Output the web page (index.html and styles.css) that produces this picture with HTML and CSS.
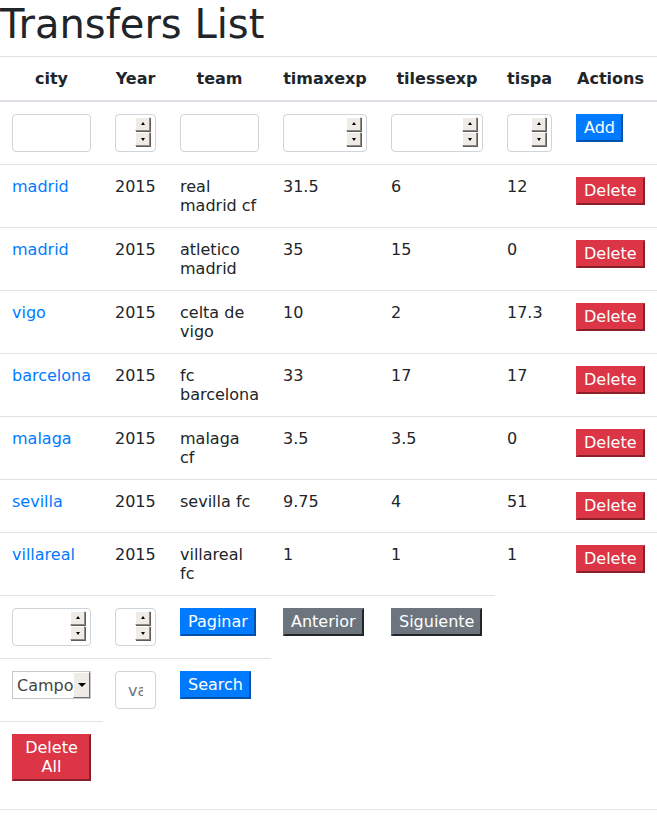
FILE: index.html
```html
<!DOCTYPE html>
<html>
<head>
<meta charset="utf-8">
<link rel="stylesheet" href="styles.css">
</head>
<body>
<h1 class="title">Transfers List</h1>
<table class="table">
  <colgroup>
    <col class="c-city"><col class="c-year"><col class="c-team"><col class="c-max"><col class="c-less"><col class="c-spa"><col class="c-act">
  </colgroup>
  <thead>
    <tr><th>city</th><th>Year</th><th>team</th><th>timaxexp</th><th>tilessexp</th><th>tispa</th><th>Actions</th></tr>
  </thead>
  <tbody>
    <tr>
      <td><input class="form-control" type="text"></td>
      <td><span class="num"><input class="form-control" type="number"><span class="spin"><span class="spin-btn up"></span><span class="spin-btn down"></span></span></span></td>
      <td><input class="form-control" type="text"></td>
      <td><span class="num"><input class="form-control" type="number"><span class="spin"><span class="spin-btn up"></span><span class="spin-btn down"></span></span></span></td>
      <td><span class="num"><input class="form-control" type="number"><span class="spin"><span class="spin-btn up"></span><span class="spin-btn down"></span></span></span></td>
      <td><span class="num"><input class="form-control" type="number"><span class="spin"><span class="spin-btn up"></span><span class="spin-btn down"></span></span></span></td>
      <td><button class="btn btn-primary">Add</button></td>
    </tr>
    <tr><td><a class="link" href="#">madrid</a></td><td>2015</td><td>real madrid cf</td><td>31.5</td><td>6</td><td>12</td><td><button class="btn btn-danger">Delete</button></td></tr>
    <tr><td><a class="link" href="#">madrid</a></td><td>2015</td><td>atletico madrid</td><td>35</td><td>15</td><td>0</td><td><button class="btn btn-danger">Delete</button></td></tr>
    <tr><td><a class="link" href="#">vigo</a></td><td>2015</td><td>celta de vigo</td><td>10</td><td>2</td><td>17.3</td><td><button class="btn btn-danger">Delete</button></td></tr>
    <tr><td><a class="link" href="#">barcelona</a></td><td>2015</td><td>fc barcelona</td><td>33</td><td>17</td><td>17</td><td><button class="btn btn-danger">Delete</button></td></tr>
    <tr><td><a class="link" href="#">malaga</a></td><td>2015</td><td>malaga cf</td><td>3.5</td><td>3.5</td><td>0</td><td><button class="btn btn-danger">Delete</button></td></tr>
    <tr><td><a class="link" href="#">sevilla</a></td><td>2015</td><td>sevilla fc</td><td>9.75</td><td>4</td><td>51</td><td><button class="btn btn-danger">Delete</button></td></tr>
    <tr><td><a class="link" href="#">villareal</a></td><td>2015</td><td>villareal fc</td><td>1</td><td>1</td><td>1</td><td><button class="btn btn-danger">Delete</button></td></tr>
    <tr>
      <td><span class="num"><input class="form-control" type="number"><span class="spin"><span class="spin-btn up"></span><span class="spin-btn down"></span></span></span></td>
      <td><span class="num"><input class="form-control" type="number"><span class="spin"><span class="spin-btn up"></span><span class="spin-btn down"></span></span></span></td>
      <td><button class="btn btn-primary">Paginar</button></td>
      <td><button class="btn btn-secondary">Anterior</button></td>
      <td><button class="btn btn-secondary">Siguiente</button></td>
    </tr>
    <tr>
      <td><span class="sel"><select class="select"><option>Campo</option><option>city</option><option>team</option></select><span class="sel-btn"></span></span></td>
      <td><input class="form-control" type="text" placeholder="value"></td>
      <td><button class="btn btn-primary">Search</button></td>
    </tr>
    <tr>
      <td><button class="btn btn-danger">Delete All</button></td>
    </tr>
  </tbody>
</table>
<hr class="rule">
</body>
</html>
```
FILE: styles.css
```css
html, body {
  margin: 0;
  padding: 0;
  background: #fff;
}
body {
  font-family: "DejaVu Sans", sans-serif;
  font-size: 16px;
  line-height: 19px;
  color: #212529;
}
.title {
  margin: 0 0 8px 0;
  font-size: 40px;
  line-height: 48px;
  font-weight: 500;
  color: #212529;
}
.table {
  width: 657px;
  table-layout: fixed;
  border-collapse: collapse;
  margin-bottom: 16px;
}
.c-city { width: 103px; }
.c-year { width: 65px; }
.c-team { width: 103px; }
.c-max { width: 108px; }
.c-less { width: 116px; }
.c-spa { width: 69px; }
.c-act { width: 93px; }
.table th,
.table td {
  padding: 12px;
  vertical-align: top;
  border-top: 1px solid #dee2e6;
  text-align: left;
}
.table th {
  font-weight: bold;
  text-align: center;
  border-bottom: 2px solid #dee2e6;
}
.link {
  color: #007bff;
  text-decoration: none;
}
.form-control {
  display: block;
  box-sizing: border-box;
  width: 100%;
  height: 38px;
  margin: 0;
  padding: 6px 12px;
  font-family: "DejaVu Sans", sans-serif;
  font-size: 16px;
  line-height: 24px;
  color: #495057;
  background: #fff;
  border: 1px solid #ced4da;
  border-radius: 4px;
  -moz-appearance: textfield;
}
.form-control::-webkit-inner-spin-button,
.form-control::-webkit-outer-spin-button {
  -webkit-appearance: none;
  margin: 0;
}
.form-control::placeholder {
  color: #6c757d;
}
.num {
  position: relative;
  display: block;
}
.spin {
  position: absolute;
  right: 5px;
  top: 3px;
  width: 16px;
  height: 30px;
  display: flex;
  flex-direction: column;
  pointer-events: none;
}
.spin-btn {
  position: relative;
  flex: 1;
  box-sizing: border-box;
  background: #efebe7;
  border: 1px solid;
  border-color: #ffffff #8e8a86 #8e8a86 #ffffff;
  box-shadow: 1px 1px 0 #5f5c59;
  margin: 0 1px 1px 0;
}
.spin-btn::after {
  content: "";
  position: absolute;
  left: 50%;
  top: 50%;
  margin-left: -2px;
  width: 0;
  height: 0;
  border-left: 2px solid transparent;
  border-right: 2px solid transparent;
}
.spin-btn.up::after {
  margin-top: -2px;
  border-bottom: 3px solid #000;
}
.spin-btn.down::after {
  margin-top: -1px;
  border-top: 3px solid #000;
}
.sel {
  position: relative;
  display: block;
  width: 79px;
  height: 28px;
}
.select {
  -webkit-appearance: none;
  appearance: none;
  display: block;
  box-sizing: border-box;
  width: 79px;
  height: 28px;
  margin: 0;
  padding: 0 0 0 4px;
  font-family: "DejaVu Sans", sans-serif;
  font-size: 16px;
  color: #444;
  background: #fff;
  border: 1px solid #c8c8c8;
  border-radius: 0;
}
.sel-btn {
  position: absolute;
  right: 1px;
  top: 1px;
  bottom: 1px;
  width: 17px;
  box-sizing: border-box;
  background: #efebe7;
  border: 1px solid;
  border-color: #ffffff #6f6b67 #6f6b67 #ffffff;
  pointer-events: none;
}
.sel-btn::after {
  content: "";
  position: absolute;
  left: 50%;
  top: 50%;
  margin-left: -4px;
  margin-top: -2px;
  width: 0;
  height: 0;
  border-left: 4px solid transparent;
  border-right: 4px solid transparent;
  border-top: 4px solid #000;
}
.btn {
  margin: 0;
  padding: 2px 6px 3px 6px;
  font-family: "DejaVu Sans", sans-serif;
  font-size: 16px;
  line-height: 19px;
  color: #fff;
  border-width: 2px;
  border-style: outset;
  border-radius: 0;
}
.btn-primary {
  background: #007bff;
  border-color: #007bff;
}
.btn-secondary {
  background: #6c757d;
  border-color: #6c757d;
}
.btn-danger {
  background: #dc3545;
  border-color: #dc3545;
}
.rule {
  margin: 16px 0 0 0;
  border: 0;
  border-top: 1px solid rgba(0, 0, 0, 0.1);
  height: 0;
}
```
